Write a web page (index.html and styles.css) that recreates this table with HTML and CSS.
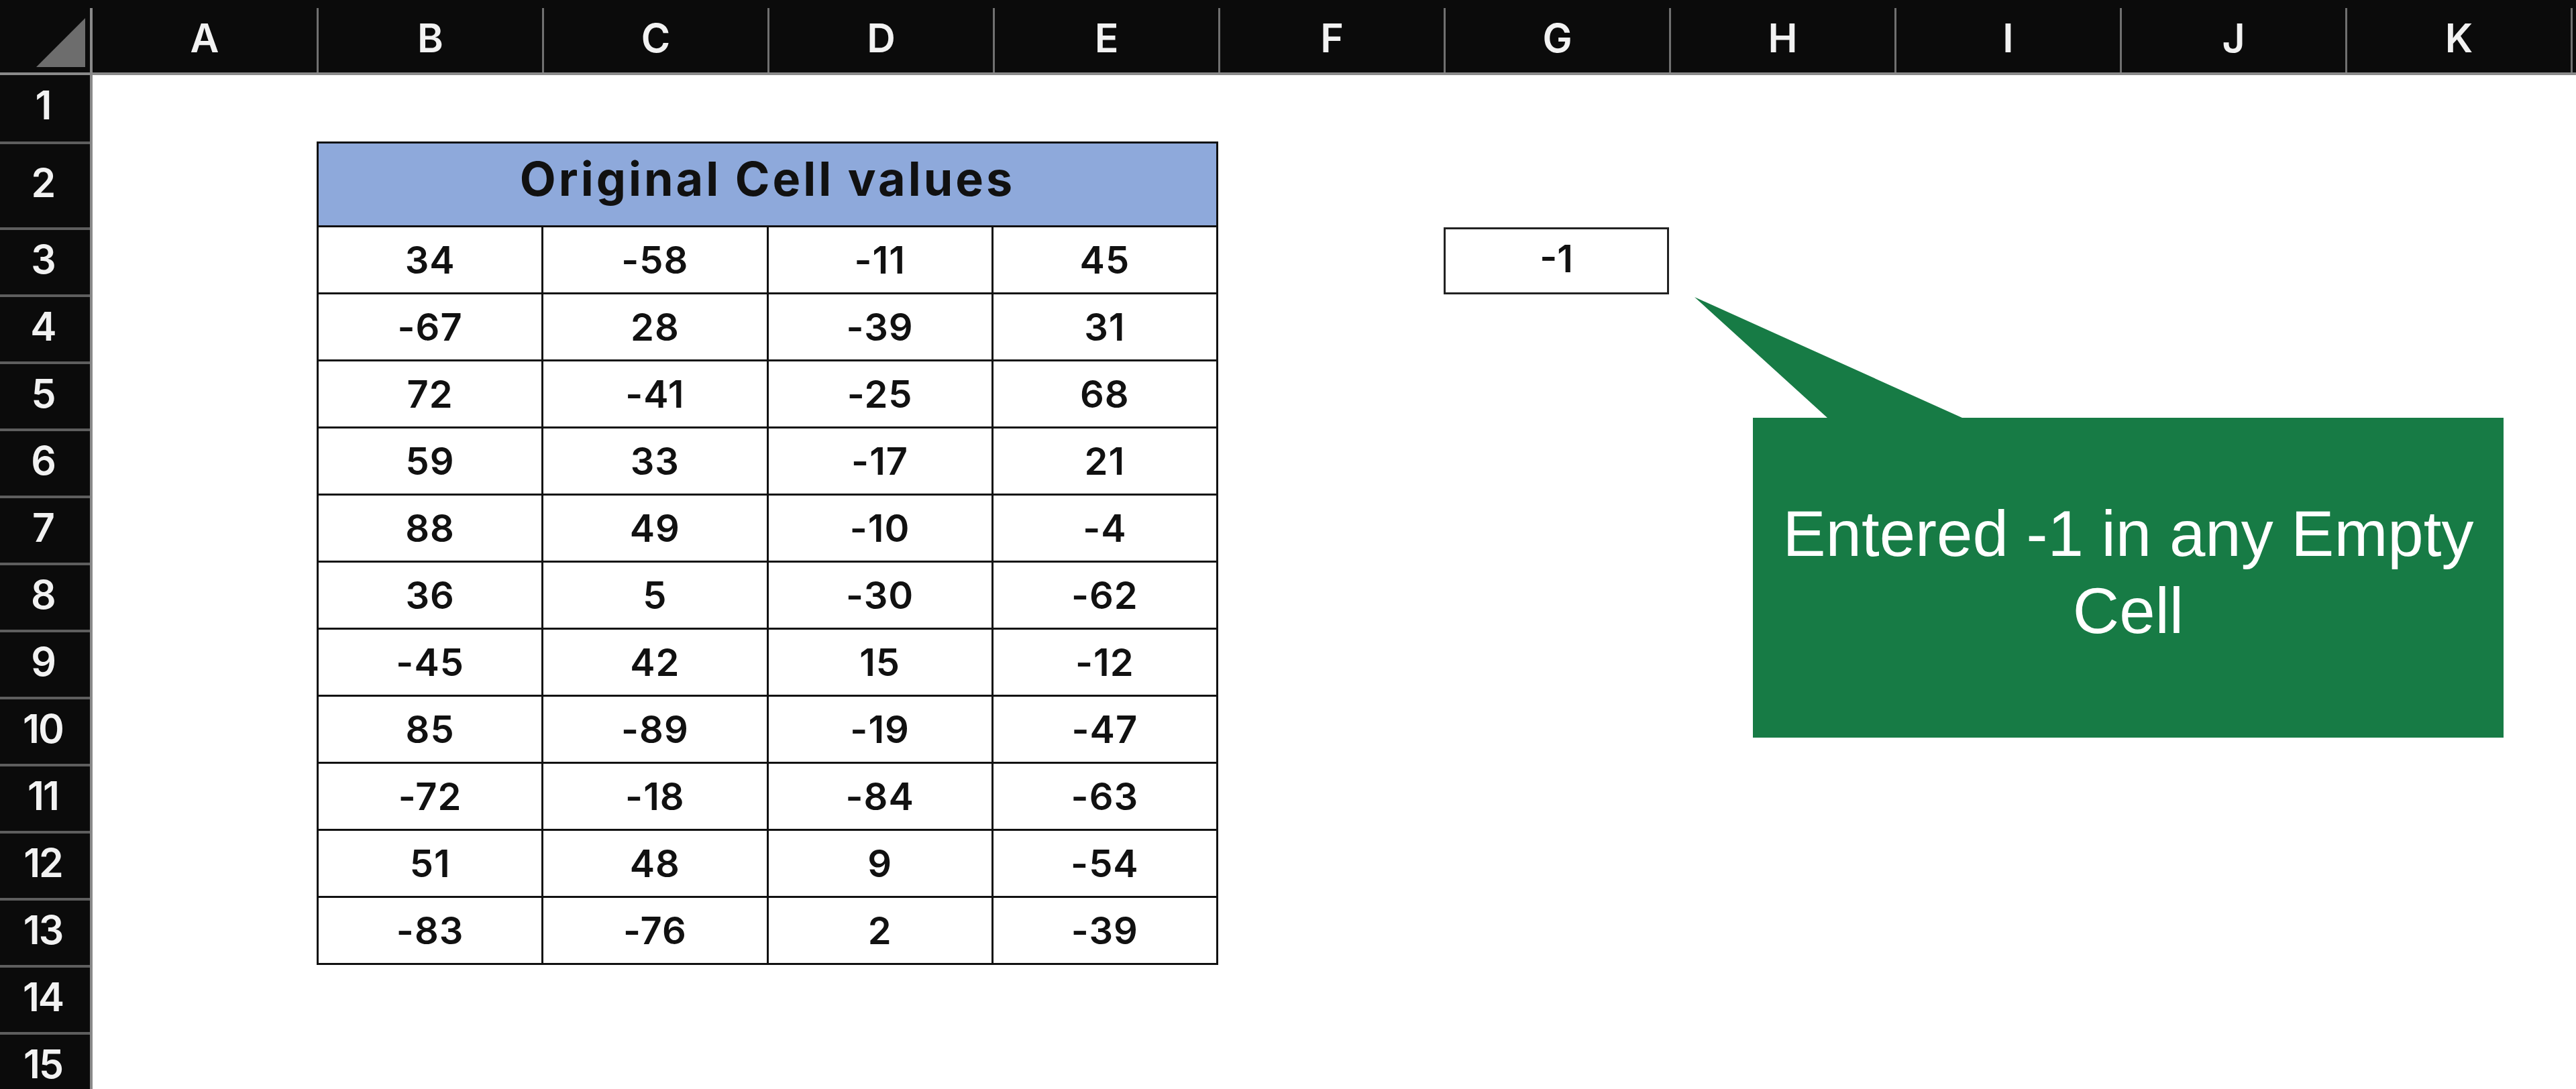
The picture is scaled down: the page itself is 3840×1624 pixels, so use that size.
FILE: index.html
```html
<!DOCTYPE html>
<html lang="en">
<head>
<meta charset="utf-8">
<title>Original Cell values</title>
<link rel="stylesheet" href="styles.css">
</head>
<body>
<div class="sheet">
  <div class="colhead">
    <div class="corner">
      <svg class="corner-tri" width="73" height="73" viewBox="0 0 73 73"><polygon points="73,0 73,73 0,73" fill="#6d6d6d"/></svg>
    </div>
    <div class="ch ch-a">A</div>
    <div class="ch">B</div>
    <div class="ch">C</div>
    <div class="ch">D</div>
    <div class="ch">E</div>
    <div class="ch">F</div>
    <div class="ch">G</div>
    <div class="ch">H</div>
    <div class="ch">I</div>
    <div class="ch">J</div>
    <div class="ch">K</div>
    <div class="ch ch-rest"></div>
  </div>
  <div class="body">
    <div class="rowhead">
      <div class="rh rh-1">1</div>
      <div class="rh rh-2">2</div>
      <div class="rh">3</div>
      <div class="rh">4</div>
      <div class="rh">5</div>
      <div class="rh">6</div>
      <div class="rh">7</div>
      <div class="rh">8</div>
      <div class="rh">9</div>
      <div class="rh">10</div>
      <div class="rh">11</div>
      <div class="rh">12</div>
      <div class="rh">13</div>
      <div class="rh">14</div>
      <div class="rh">15</div>
    </div>
    <div class="cells">
      <div class="tbl">
        <div class="c title">Original Cell values</div>
        <div class="c">34</div><div class="c">-58</div><div class="c">-11</div><div class="c">45</div>
        <div class="c">-67</div><div class="c">28</div><div class="c">-39</div><div class="c">31</div>
        <div class="c">72</div><div class="c">-41</div><div class="c">-25</div><div class="c">68</div>
        <div class="c">59</div><div class="c">33</div><div class="c">-17</div><div class="c">21</div>
        <div class="c">88</div><div class="c">49</div><div class="c">-10</div><div class="c">-4</div>
        <div class="c">36</div><div class="c">5</div><div class="c">-30</div><div class="c">-62</div>
        <div class="c">-45</div><div class="c">42</div><div class="c">15</div><div class="c">-12</div>
        <div class="c">85</div><div class="c">-89</div><div class="c">-19</div><div class="c">-47</div>
        <div class="c">-72</div><div class="c">-18</div><div class="c">-84</div><div class="c">-63</div>
        <div class="c">51</div><div class="c">48</div><div class="c">9</div><div class="c">-54</div>
        <div class="c">-83</div><div class="c">-76</div><div class="c">2</div><div class="c">-39</div>
      </div>
      <div class="g3">-1</div>
    </div>
  </div>
  <div class="callout">
    <svg class="callout-shape" width="1206" height="657" viewBox="0 0 1206 657"><polygon points="0,0 399,180 1206,180 1206,657 87,657 87,180 198,180" fill="#177b45"/></svg>
    <div class="callout-text">Entered -1 in any Empty Cell</div>
  </div>
</div>
</body>
</html>
```
FILE: styles.css
```css
html, body {
  margin: 0;
  padding: 0;
  background: #ffffff;
}
body {
  width: 3840px;
  height: 1624px;
  overflow: hidden;
}
.sheet {
  position: relative;
  width: 3840px;
  height: 1624px;
  overflow: hidden;
  font-family: "Inter", "Open Sans", sans-serif;
}
.colhead {
  display: flex;
  height: 112px;
  box-sizing: border-box;
  background: #0b0b0b;
  border-bottom: 4px solid #8a8a8a;
}
.corner {
  width: 134px;
  flex: none;
  display: flex;
  align-items: flex-end;
  justify-content: flex-end;
}
.corner-tri {
  display: block;
  margin: 0 7px 8px 0;
}
.ch {
  flex: none;
  width: 336px;
  box-sizing: border-box;
  margin-top: 12px;
  height: 96px;
  border-left: 3px solid #707070;
  color: #f2f2f2;
  font-size: 59px;
  font-weight: 600;
  display: flex;
  align-items: center;
  justify-content: center;
  padding-bottom: 7px;
}
.ch-a {
  width: 338px;
  border-left: 4px solid #8a8a8a;
}
.ch-rest {
  flex: 1;
}
.body {
  display: flex;
}
.rowhead {
  width: 138px;
  flex: none;
  box-sizing: border-box;
  background: #0b0b0b;
  border-right: 4px solid #8a8a8a;
}
.rh {
  height: 100px;
  box-sizing: border-box;
  border-top: 4px solid #5e5e5e;
  color: #f2f2f2;
  font-size: 59px;
  font-weight: 600;
  letter-spacing: -2px;
  display: flex;
  align-items: center;
  justify-content: center;
  padding-bottom: 10px;
  padding-right: 6px;
}
.rh-1 {
  height: 99px;
  border-top: none;
}
.rh-2 {
  height: 128px;
}
.cells {
  flex: 1;
  display: grid;
  grid-template-columns: 334px repeat(10, 336px) 1fr;
  grid-template-rows: 99px 128px repeat(13, 100px);
}
.tbl {
  grid-column: 2 / 6;
  grid-row: 2 / 14;
  display: grid;
  grid-template-columns: repeat(4, 1fr);
  grid-template-rows: 125px repeat(11, 100px);
  border-top: 3px solid #111;
  border-left: 3px solid #111;
}
.c {
  box-sizing: border-box;
  border-right: 3px solid #111;
  border-bottom: 3px solid #111;
  display: flex;
  align-items: center;
  justify-content: center;
  font-size: 56px;
  font-weight: 600;
  color: #111;
  letter-spacing: 1px;
}
.title {
  grid-column: 1 / 5;
  background: #8ea9db;
  font-size: 70px;
  font-weight: 700;
  letter-spacing: 4px;
  padding-bottom: 17px;
}
.g3 {
  grid-column: 7;
  grid-row: 3;
  box-sizing: border-box;
  border: 3px solid #222;
  display: flex;
  align-items: center;
  justify-content: center;
  font-size: 56px;
  font-weight: 600;
  color: #111;
  padding-bottom: 6px;
}
.callout {
  position: absolute;
  left: 2526px;
  top: 443px;
  width: 1206px;
  height: 657px;
}
.callout-shape {
  position: absolute;
  left: 0;
  top: 0;
}
.callout-text {
  position: relative;
  margin: 180px 0 0 87px;
  width: 1119px;
  height: 477px;
  box-sizing: border-box;
  padding-bottom: 18px;
  display: flex;
  align-items: center;
  justify-content: center;
  text-align: center;
  color: #ffffff;
  font-family: "Liberation Sans", Arial, sans-serif;
  font-size: 96px;
  line-height: 115px;
}
```
